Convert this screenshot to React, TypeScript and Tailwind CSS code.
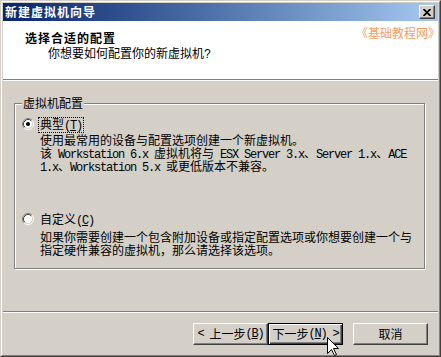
import React from "react";

const MONO =
  "inline-block font-['Liberation_Mono',monospace] text-[12px] tracking-[-1.2px] whitespace-pre";

function T({ s, lh = "leading-[13px]" }: { s: string; lh?: string }) {
  const parts = s.match(/[\x00-\x7f]+|[^\x00-\x7f]+/g) || [];
  return (
    <>
      {parts.map((p, i) =>
        /^[\x00-\x7f]+$/.test(p) ? (
          <span key={i} className={MONO + " " + lh}>
            {p}
          </span>
        ) : (
          <span key={i} className={"inline-block " + lh}>
            {p}
          </span>
        )
      )}
    </>
  );
}

function Mn({ k }: { k: string }) {
  return (
    <>
      <span className={MONO + " leading-[12px]"}>(</span>
      <span className={MONO + " leading-[12px] underline underline-offset-[1px]"}>{k}</span>
      <span className={MONO + " leading-[12px]"}>)</span>
    </>
  );
}

function Radio({ checked }: { checked?: boolean }) {
  return (
    <svg width="12" height="12" viewBox="0 0 12 12" className="shrink-0 block">
      <circle cx="6" cy="6" r="4.5" fill="#ffffff" />
      <path d="M2.11 9.89 A5.5 5.5 0 0 1 9.89 2.11" fill="none" stroke="#808080" strokeWidth="1" />
      <path d="M9.89 2.11 A5.5 5.5 0 0 1 2.11 9.89" fill="none" stroke="#ffffff" strokeWidth="1" />
      <path d="M2.82 9.18 A4.5 4.5 0 0 1 9.18 2.82" fill="none" stroke="#404040" strokeWidth="1" />
      <path d="M9.18 2.82 A4.5 4.5 0 0 1 2.82 9.18" fill="none" stroke="#d4d0c8" strokeWidth="1" />
      {checked && <circle cx="6" cy="6" r="2" fill="#000000" />}
    </svg>
  );
}

function Btn({
  children,
  def,
}: {
  children: React.ReactNode;
  def?: boolean;
}) {
  return def ? (
    <div className="w-[75px] h-[22px] border border-black shadow-[inset_1px_1px_0_#ffffff,inset_-1px_-1px_0_#404040,inset_-2px_-2px_0_#808080] flex items-center justify-center leading-[12px] whitespace-nowrap">
      {children}
    </div>
  ) : (
    <div className="w-[75px] h-[22px] border-t border-l border-white border-r border-b border-r-[#404040] border-b-[#404040] shadow-[inset_-1px_-1px_0_#808080] flex items-center justify-center leading-[12px] whitespace-nowrap">
      {children}
    </div>
  );
}

export default function App() {
  return (
    <div className="relative w-[441px] h-[357px] overflow-hidden border border-t-[#d4d0c8] border-l-[#d4d0c8] border-r-[#404040] border-b-[#404040] bg-[#d4d0c8] font-['Noto_Sans_CJK_SC',sans-serif] text-[12px] text-black">
      <div className="h-full border border-t-white border-l-white border-r-[#808080] border-b-[#808080] p-px flex flex-col">
        {/* title bar */}
        <div className="h-[18px] shrink-0 flex items-center justify-between bg-linear-to-r from-[#0a246a] to-[#a6caf0] pl-[2px] pr-[3px]">
          <span className="text-white font-bold tracking-[1px] leading-[14px]">
            新建虚拟机向导
          </span>
          <div className="w-[16px] h-[14px] bg-[#d4d0c8] border-t border-l border-white border-r border-b border-r-[#404040] border-b-[#404040] shadow-[inset_-1px_-1px_0_#808080] flex items-center justify-center">
            <svg width="8" height="7" viewBox="0 0 8 7">
              <path d="M0.5 0 L7.5 7 M7.5 0 L0.5 7" stroke="#000" strokeWidth="1.8" />
            </svg>
          </div>
        </div>

        {/* header */}
        <div className="relative h-[59px] shrink-0 bg-white border-b border-[#808080]">
          <div className="absolute right-[-2px] top-[5px] text-[#f79c5c] leading-[13px] whitespace-nowrap">
            《基础教程网》
          </div>
          <div className="pl-[22px] pt-[10px] font-bold tracking-[1px] leading-[13px]">
            选择合适的配置
          </div>
          <div className="pl-[45px] pt-[2px] leading-[13px]">
            <T s="你想要如何配置你的新虚拟机?" />
          </div>
        </div>
        <div className="h-px shrink-0 bg-white" />

        {/* group box */}
        <div className="relative ml-[11px] mt-[22px] w-[411px] h-[166px] shrink-0 border border-[#808080] shadow-[inset_1px_1px_0_#ffffff,1px_1px_0_#ffffff]">
          <div className="absolute left-[7px] top-[-8px] px-[1px] bg-[#d4d0c8] leading-[13px]">
            虚拟机配置
          </div>
          <div className="pl-[7px] pt-[13px]">
            <div className="flex items-start">
              <div className="mt-[1px]">
                <Radio checked />
              </div>
              <div className="ml-[4px] border border-dotted border-black px-px leading-[12px] whitespace-nowrap">
                典型<Mn k="T" />
              </div>
            </div>
            <div className="ml-[18px] leading-[13px] whitespace-nowrap">
              <div className="h-[13px]">
                <T s="使用最常用的设备与配置选项创建一个新虚拟机。" />
              </div>
              <div className="h-[13px]">
                <T s="该 Workstation 6.x 虚拟机将与 ESX Server 3.x、Server 1.x、ACE" />
              </div>
              <div className="h-[13px]">
                <T s="1.x、Workstation 5.x 或更低版本不兼容。" />
              </div>
            </div>

            <div className="flex items-start mt-[40px]">
              <div className="mt-[1px]">
                <Radio />
              </div>
              <div className="ml-[4px] border border-transparent px-px leading-[12px] whitespace-nowrap">
                自定义<Mn k="C" />
              </div>
            </div>
            <div className="ml-[18px] mt-[2px] leading-[13px] whitespace-nowrap">
              <div className="h-[13px]">
                <T s="如果你需要创建一个包含附加设备或指定配置选项或你想要创建一个与" />
              </div>
              <div className="h-[13px]">
                <T s="指定硬件兼容的虚拟机，那么请选择该选项。" />
              </div>
            </div>
          </div>
        </div>

        {/* separator */}
        <div className="mt-[42px] h-px shrink-0 bg-[#808080]" />
        <div className="h-px shrink-0 bg-white" />

        {/* buttons */}
        <div className="mt-[10px] flex justify-end pr-[10px]">
          <Btn>
            <span className={MONO + " leading-[12px]"}>{"< "}</span>上一步<Mn k="B" />
          </Btn>
          <Btn def>
            下一步<Mn k="N" />
            <span className={MONO + " leading-[12px]"}>{" >"}</span>
          </Btn>
          <div className="w-[10px]" />
          <Btn>取消</Btn>
        </div>
      </div>

      {/* mouse cursor */}
      <svg
        className="absolute left-[326px] top-[336px]"
        width="13"
        height="21"
        viewBox="0 0 13 21"
      >
        <path
          d="M0.5 0.5 L0.5 16.5 L4.5 12.5 L7.5 18.5 L9.5 17.5 L6.5 11.5 L11.5 11.5 Z"
          fill="#ffffff"
          stroke="#000000"
          strokeWidth="1"
        />
      </svg>
    </div>
  );
}
